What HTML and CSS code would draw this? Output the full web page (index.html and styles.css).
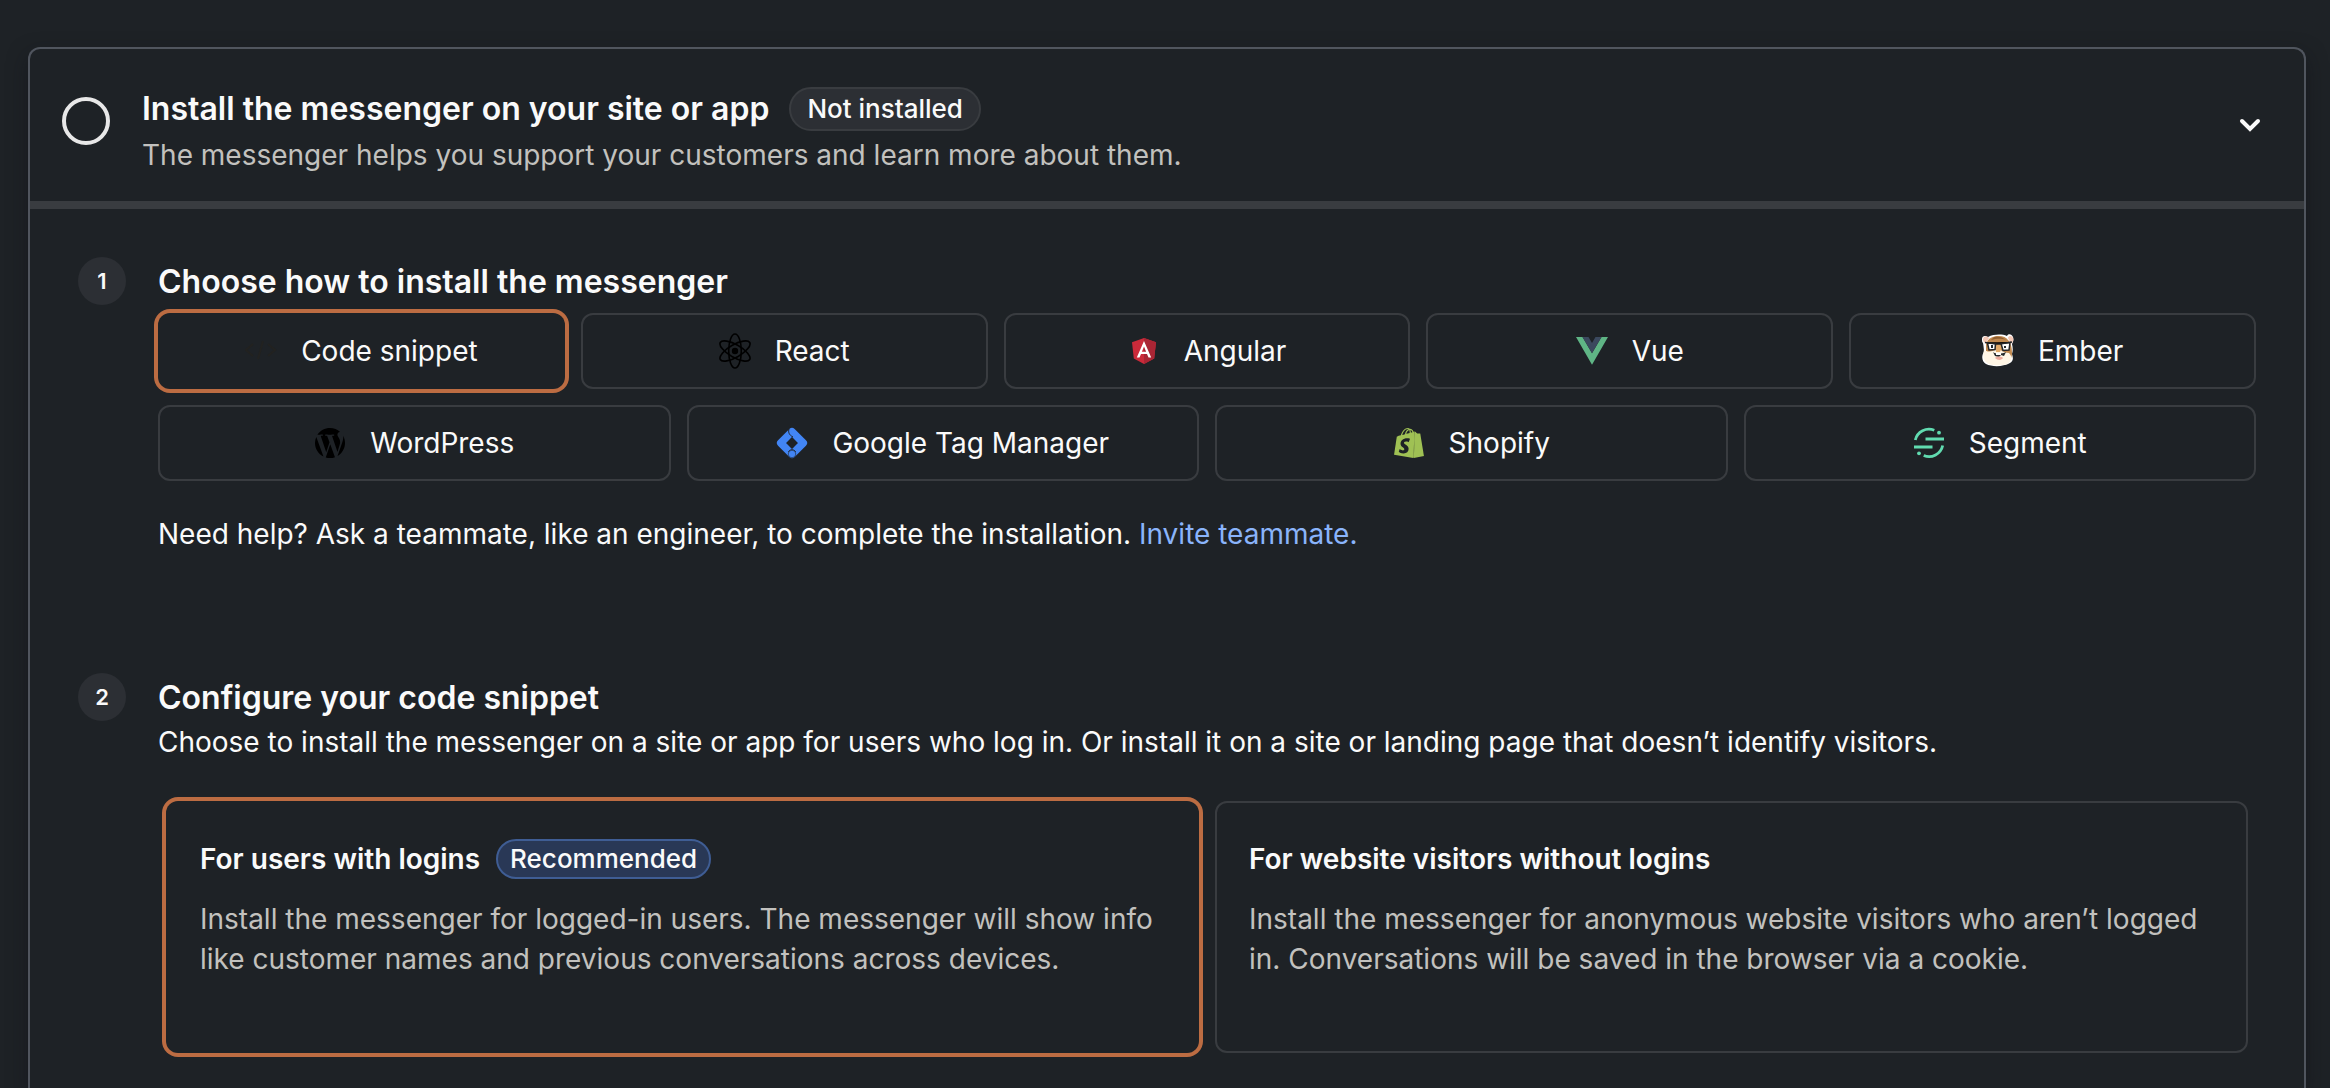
FILE: index.html
```html
<!DOCTYPE html>
<html lang="en">
<head>
<meta charset="utf-8">
<meta name="viewport" content="width=device-width, initial-scale=1">
<title>Install the messenger</title>
<link rel="stylesheet" href="styles.css">
</head>
<body>
<main class="card">
  <header class="card-header">
    <span class="status-ring"></span>
    <div class="card-heading">
      <div class="title-row">
        <h1 class="title">Install the messenger on your site or app</h1>
        <span class="pill">Not installed</span>
      </div>
      <p class="subtitle">The messenger helps you support your customers and learn more about them.</p>
    </div>
    <button class="toggle" type="button" aria-label="Collapse section">
      <svg width="24" height="24" viewBox="0 0 24 24" fill="none" stroke="currentColor" stroke-width="4" stroke-linecap="round"><path d="M4 8l8 8 8-8"/></svg>
    </button>
  </header>

  <div class="steps">
    <section class="step">
      <span class="step-number">1</span>
      <div class="step-body">
        <h2 class="title step-title">Choose how to install the messenger</h2>
        <div class="methods">
          <div class="method-row">
            <button class="tile selected" type="button" aria-pressed="true">
              <svg class="icon" viewBox="0 0 32 32" fill="none" stroke="#222220" stroke-width="2"><path d="M8 9l-7 6 7 6M23 9l7 6-7 6M18 6l-5 18"/></svg>
              Code snippet
            </button>
            <button class="tile" type="button">
              <svg class="icon" viewBox="0 0 32 36" fill="none" stroke="#000" stroke-width="1.6"><circle cx="16" cy="18" r="3.2" fill="#000" stroke="none"/><ellipse cx="16" cy="18" rx="6.3" ry="17"/><ellipse cx="16" cy="18" rx="6.3" ry="17" transform="rotate(60 16 18)"/><ellipse cx="16" cy="18" rx="6.3" ry="17" transform="rotate(-60 16 18)"/></svg>
              React
            </button>
            <button class="tile" type="button">
              <svg class="icon" viewBox="0 0 32 32"><path fill="#cb2a3a" d="M16 3l12 4.200-1.800 16.200L16 29 5.800 23.400 4 7.200z"/><path fill="#a92534" d="M16 3l12 4.200-1.800 16.200L16 29z"/><path fill="#fff" fill-rule="evenodd" d="M16 6L8.800 22.600h2.700l1.500-3.700h6l1.500 3.700h2.700zm2.100 10.700h-4.200L16 11.600z"/></svg>
              Angular
            </button>
            <button class="tile" type="button">
              <svg class="icon" viewBox="0 0 32 32"><path fill="#5fb585" d="M0 2h6.500L16 18.300 25.500 2H32L16 29.700z"/><path fill="#3b495e" d="M6.500 2h6L16 8l3.500-6h6L16 18.300z"/></svg>
              Vue
            </button>
            <button class="tile" type="button">
              <svg class="icon" viewBox="0 0 32 32"><path fill="#fff" d="M0 4c0-3 3-4 6-2 6-3 14-3 19-1 1-3 5-2 6 1s0 5-1 7c1 4 1 7 0 10 1 3 2 7-2 9-7 4-18 4-24 1-4-2-5-8-2-12 0-4-1-9-1-9-1-1-1-2-1-4z"/><path fill="#c18a50" d="M4 9C6 3 11 1 17 1c8 0 13 6 13 17 0 6-3 10-8 10L4 16z"/><path fill="#f3c7b5" d="M1 4c1-3 4-3 6-1L4 8c-2 0-3-2-3-4zm25-1c1-3 4-2 5 0s0 4-2 6z"/><path fill="#915f2f" d="M12 2c4-1 9 0 12 3-6-2-10-1-15 0z"/><path fill="#fff6e5" d="M2 15c5 3 9 1 13-1 4 0 6 4 12 4 5 5 2 11-6 12-9 1-17 0-19-6-1-3-1-6 0-9z"/><path fill="#e3aa68" d="M14 11l3-3 3 4-2 5h-4z"/><path fill="#fff" stroke="#252627" stroke-width="1.500" d="M5.500 8l8 .5-.5 6-6 .5zM19 8.500l9-1-1 7.500-6 .5z"/><path stroke="#252627" stroke-width="1.500" d="M3 7.500l12 1.500h3l12-2"/><path fill="#24292b" d="M9 10h2v3H9zM22 11h2v2h-2zM11 17c2 2 9 2 13 0l-2 4-3-1-2 2-4-1z"/><path fill="#fff" d="M14 18h5v2h-5z"/><path fill="#eba99c" d="M13 23c2-2 6-2 8 0-1 2-5 3-8 0z"/></svg>
              Ember
            </button>
          </div>
          <div class="method-row">
            <button class="tile" type="button">
              <svg class="icon" viewBox="0.500 0.500 23 23"><path d="M21.469 6.825c.84 1.537 1.318 3.300 1.318 5.175 0 3.979-2.156 7.456-5.363 9.325l3.295-9.527c.615-1.540.820-2.771.820-3.864 0-.405-.026-.780-.070-1.109m-7.981.105c.647-.030 1.232-.105 1.232-.105.582-.075.514-.930-.067-.899 0 0-1.755.135-2.880.135-1.064 0-2.850-.150-2.850-.150-.585-.030-.661.855-.075.885 0 0 .540.061 1.125.090l1.680 4.605-2.370 7.080L5.354 6.900c.649-.030 1.234-.100 1.234-.100.585-.075.516-.930-.065-.896 0 0-1.746.138-2.874.138-.200 0-.438-.008-.690-.015C4.911 3.150 8.235 1.215 12 1.215c2.809 0 5.365 1.072 7.286 2.833-.046-.003-.091-.009-.141-.009-1.060 0-1.812.923-1.812 1.914 0 .890.513 1.643 1.060 2.531.411.720.890 1.643.890 2.977 0 .915-.354 1.994-.821 3.479l-1.075 3.585-3.900-11.595zM12 22.784c-1.059 0-2.081-.153-3.048-.437l3.237-9.406 3.315 9.087c.024.053.050.101.078.149-1.120.393-2.325.607-3.582.607M1.211 12c0-1.564.336-3.050.935-4.390L7.290 21.709C3.694 19.960 1.211 16.271 1.211 12z"/></svg>
              WordPress
            </button>
            <button class="tile" type="button">
              <svg class="icon" viewBox="0 0 32 32" fill="none" stroke="#4285f4"><path stroke-width="7.500" stroke-linejoin="round" d="M16 4.700L27.300 16 16 27.300 4.700 16z"/><path stroke="#1e2226" stroke-width="1" d="M13 2c-1 3 0 6 4 8M12.500 25c1-3 6-3 7 0"/><circle cx="16" cy="27" r="3.800" fill="#4285f4" stroke="#1e2226" stroke-width=".6"/></svg>
              Google Tag Manager
            </button>
            <button class="tile" type="button">
              <svg class="icon" viewBox="0.650 -2.400 22.600 28.800" preserveAspectRatio="none" fill="#9fc154"><path d="M15.337 23.979l7.216-1.561s-2.604-17.613-2.625-17.730c-.018-.116-.114-.192-.211-.192s-1.929-.136-1.929-.136-1.275-1.274-1.439-1.411c-.045-.037-.075-.057-.121-.074l-.914 21.104zM11.710 11.305s-.810-.424-1.774-.424c-1.447 0-1.504.906-1.504 1.141 0 1.232 3.240 1.715 3.240 4.629 0 2.295-1.440 3.760-3.406 3.760-2.354 0-3.540-1.465-3.540-1.465l.646-2.086s1.245 1.066 2.280 1.066c.675 0 .975-.545.975-.932 0-1.619-2.654-1.694-2.654-4.359-.034-2.237 1.571-4.416 4.827-4.416 1.257 0 1.875.361 1.875.361zM11.170.830c.136 0 .271.038.405.135-.984.465-2.064 1.639-2.508 3.992-.656.213-1.293.405-1.889.578C7.697 3.750 8.951.840 11.170.830zm1.235 2.949v.135c-.754.232-1.583.484-2.394.736.466-1.777 1.333-2.645 2.085-2.971.193.501.309 1.176.309 2.100zm.539-2.234c.694.074 1.141.867 1.429 1.755-.349.114-.735.231-1.158.366v-.252c0-.752-.096-1.371-.271-1.869zm2.992 1.289c-.020 0-.060.021-.078.021s-.289.075-.714.210c-.423-1.233-1.176-2.370-2.508-2.370h-.115C12.135.209 11.669 0 11.265 0 8.159 0 6.675 3.877 6.210 5.846c-1.194.365-2.063.636-2.160.674-.675.213-.694.232-.772.870-.075.462-1.830 14.063-1.830 14.063L15.009 24z"/><path stroke="#9fc154" stroke-width=".6" d="M16.100 3.500l-.9 20"/></svg>
              Shopify
            </button>
            <button class="tile" type="button">
              <svg class="icon" viewBox="0 0 32 32" fill="none" stroke="#61dbb0" stroke-width="2.800"><path d="M2.300 13A14 14 0 0 1 21.300 3.200M29.700 18.500A14 14 0 0 1 10.700 28.500M12.500 12H31M1 20h18.500"/><circle cx="26" cy="5.700" r="1.900" fill="#61dbb0" stroke="none"/><circle cx="6" cy="26.300" r="1.900" fill="#61dbb0" stroke="none"/></svg>
              Segment
            </button>
          </div>
        </div>
        <p class="help">Need help? Ask a teammate, like an engineer, to complete the installation. <a class="link" href="#invite">Invite teammate.</a></p>
      </div>
    </section>

    <section class="step">
      <span class="step-number">2</span>
      <div class="step-body">
        <h2 class="title step-title">Configure your code snippet</h2>
        <p class="step-text">Choose to install the messenger on a site or app for users who log in. Or install it on a site or landing page that doesn’t identify visitors.</p>
        <div class="options">
          <button class="option selected" type="button" aria-pressed="true">
            <span class="option-head"><span class="option-title">For users with logins</span><span class="pill pill-info">Recommended</span></span>
            <span class="option-text">Install the messenger for logged-in users. The messenger will show info like customer names and previous conversations across devices.</span>
          </button>
          <button class="option" type="button">
            <span class="option-head"><span class="option-title">For website visitors without logins</span></span>
            <span class="option-text">Install the messenger for anonymous website visitors who aren’t logged in. Conversations will be saved in the browser via a cookie.</span>
          </button>
        </div>
      </div>
    </section>
  </div>
</main>
</body>
</html>
```

FILE: styles.css
```css
* {
  box-sizing: border-box;
}

body {
  margin: 0;
  min-height: 100vh;
  padding: 47px 24px 0 28px;
  display: flex;
  background: #1e2226;
  color: #fafafa;
  font: 400 28px/40px Inter, "Liberation Sans", sans-serif;
}

h1,
h2,
p {
  margin: 0;
}

button {
  font: inherit;
  color: inherit;
  background: none;
  cursor: pointer;
}

.card {
  flex: 1;
  min-width: 0;
  background: #1e2226;
  border: 2px solid #50555e;
  border-bottom: 0;
  border-radius: 12px 12px 0 0;
  box-shadow: 0 8px 20px rgba(16, 16, 24, 0.5);
}

.card-header {
  display: flex;
  gap: 32px;
  padding: 36px 32px 26px;
  border-bottom: 8px solid #393c40;
}

.status-ring {
  flex: none;
  width: 48px;
  height: 48px;
  margin-top: 12px;
  border: 4px solid #e8e8e8;
  border-radius: 50%;
}

.card-heading {
  flex: 1;
}

.title-row {
  display: flex;
  align-items: center;
  gap: 20px;
}

.title {
  font-size: 32px;
  line-height: 48px;
  font-weight: 600;
}

.subtitle {
  padding-top: 2px;
  color: #c2c1be;
}

.pill {
  padding: 0 16px;
  border: 2px solid #393c40;
  border-radius: 22px;
  background: #2c2f34;
  font-size: 26px;
  line-height: 40px;
  font-weight: 500;
}

.pill-info {
  padding: 0 12px;
  border-color: #3f5d94;
  background: #293856;
  line-height: 36px;
}

.toggle {
  display: flex;
  align-self: flex-start;
  margin-top: 18px;
  padding: 10px;
  border: 0;
}

.steps {
  display: flex;
  flex-direction: column;
  gap: 119px;
  padding: 48px 48px 35px;
}

.step {
  display: flex;
  gap: 32px;
}

.step-number {
  flex: none;
  width: 48px;
  height: 48px;
  border-radius: 50%;
  background: #2c2f34;
  font-size: 22px;
  line-height: 48px;
  font-weight: 600;
  text-align: center;
}

.step-body {
  flex: 1;
  min-width: 0;
}

.step-title {
  padding-top: 1px;
}

.methods {
  display: grid;
  gap: 16px;
  padding-top: 7px;
}

.method-row {
  display: grid;
  grid-auto-flow: column;
  grid-auto-columns: minmax(0, 1fr);
  gap: 16px;
}

.tile {
  display: flex;
  align-items: center;
  justify-content: center;
  gap: 24px;
  height: 76px;
  padding: 0;
  border: 2px solid #393c40;
  border-radius: 12px;
}

.tile.selected,
.option.selected {
  border-color: transparent;
  box-shadow: 0 0 0 4px #bc6c42;
}

.icon {
  flex: none;
  width: 32px;
  height: 36px;
}

.help {
  padding-top: 33px;
}

.link {
  color: #8ab4fb;
  text-decoration: none;
}

.options {
  display: grid;
  grid-template-columns: repeat(2, minmax(0, 1fr));
  gap: 16px;
  padding: 39px 8px 0;
}

.option {
  display: flex;
  flex-direction: column;
  gap: 20px;
  min-height: 252px;
  padding: 36px 32px;
  border: 2px solid #393c40;
  border-radius: 12px;
  text-align: left;
}

.option-head {
  display: flex;
  align-items: center;
  gap: 16px;
}

.option-title {
  font-weight: 600;
}

.option-text {
  color: #c2c1be;
}
```
